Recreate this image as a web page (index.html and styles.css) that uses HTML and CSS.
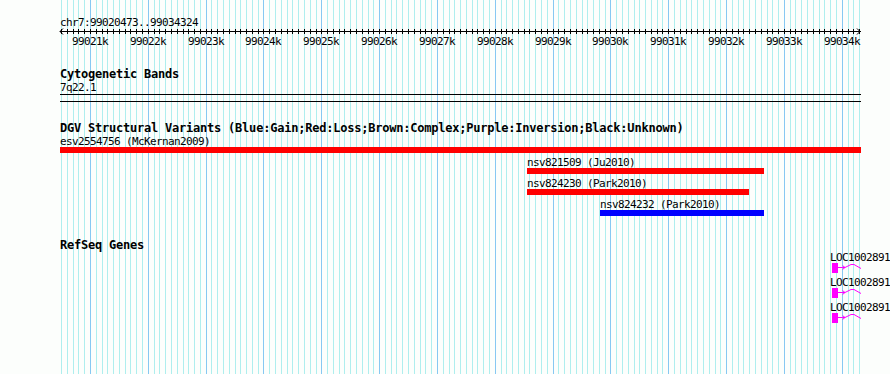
FILE: index.html
```html
<!DOCTYPE html>
<html lang="en">

<head>
    <meta charset="UTF-8">
    <meta name="viewport" content="width=device-width, initial-scale=1.0">
    <title>chr7:99020473..99034324</title>
    <link rel="stylesheet" href="styles.css">
</head>

<body>

<div class="panel">
    <svg class="grid" id="grid" width="890" height="374"></svg>

    <div class="tracks">
        <div class="ruler">
            <div class="ruler-label">chr7:99020473..99034324</div>
            <div class="axis" id="axis">
                <svg class="axis-line" id="axisLine" width="801" height="8"></svg>
            </div>
        </div>

        <div class="track cyto">
            <div class="track-title">Cytogenetic Bands</div>
            <div class="band-label">7q22.1</div>
            <div class="band"></div>
        </div>

        <div class="track dgv">
            <div class="track-title">DGV Structural Variants (Blue:Gain;Red:Loss;Brown:Complex;Purple:Inversion;Black:Unknown)</div>
            <div class="feature">
                <div class="feature-label">esv2554756 (McKernan2009)</div>
                <div class="bar loss" style="width:801px"></div>
            </div>
            <div class="feature" style="margin-left:467px">
                <div class="feature-label">nsv821509 (Ju2010)</div>
                <div class="bar loss" style="width:237px"></div>
            </div>
            <div class="feature" style="margin-left:467px">
                <div class="feature-label">nsv824230 (Park2010)</div>
                <div class="bar loss" style="width:222px"></div>
            </div>
            <div class="feature" style="margin-left:540px">
                <div class="feature-label">nsv824232 (Park2010)</div>
                <div class="bar gain" style="width:164px"></div>
            </div>
        </div>

        <div class="track refseq">
            <div class="track-title">RefSeq Genes</div>
            <div class="gene">
                <div class="gene-label">LOC1002891</div>
                <svg class="gene-glyph" width="30" height="11"><rect x="0" y="0" width="6" height="10" fill="#ff00ff"/><path d="M6 4.5H13M10.5 2.5L13 4.5L10.5 6.5M13 4.5L19 1.5H22L29 5.5" fill="none" stroke="#ff00ff" stroke-width="1"/></svg>
            </div>
            <div class="gene">
                <div class="gene-label">LOC1002891</div>
                <svg class="gene-glyph" width="30" height="11"><rect x="0" y="0" width="6" height="10" fill="#ff00ff"/><path d="M6 4.5H13M10.5 2.5L13 4.5L10.5 6.5M13 4.5L19 1.5H22L29 5.5" fill="none" stroke="#ff00ff" stroke-width="1"/></svg>
            </div>
            <div class="gene">
                <div class="gene-label">LOC1002891</div>
                <svg class="gene-glyph" width="30" height="11"><rect x="0" y="0" width="6" height="10" fill="#ff00ff"/><path d="M6 4.5H13M10.5 2.5L13 4.5L10.5 6.5M13 4.5L19 1.5H22L29 5.5" fill="none" stroke="#ff00ff" stroke-width="1"/></svg>
            </div>
        </div>
    </div>
</div>

<script>
const inicio = 99020473;
const fin = 99034324;
const izquierda = 60;
const ancho = 801;
const escala = ancho / (fin - inicio);
const NS = 'http://www.w3.org/2000/svg';

function posicion(bp) {
    return Math.floor(izquierda + (bp - inicio) * escala);
}

// Lineas de la rejilla cada 100 bp
const grid = document.getElementById('grid');
for (let bp = Math.ceil(inicio / 100) * 100; bp <= fin; bp += 100) {
    const r = document.createElementNS(NS, 'rect');
    r.setAttribute('x', posicion(bp));
    r.setAttribute('y', 0);
    r.setAttribute('width', 1);
    r.setAttribute('height', 374);
    r.setAttribute('fill', bp % 1000 === 0 ? '#87c8f2' : '#aeeeee');
    grid.appendChild(r);
}

// Regla con marcas y etiquetas
const axisLine = document.getElementById('axisLine');
const axis = document.getElementById('axis');
let d = 'M0 3.5H801M3 0.5L0 3.5L3 6.5M797 0.5L800 3.5L797 6.5';
for (let bp = Math.ceil(inicio / 100) * 100; bp <= fin; bp += 100) {
    const x = posicion(bp) - izquierda + 0.5;
    d += 'M' + x + ' 1V6';
    if (bp % 1000 === 0) {
        const label = document.createElement('span');
        label.className = 'tick-label';
        label.textContent = (bp / 1000) + 'k';
        label.style.left = (posicion(bp) - izquierda - 18) + 'px';
        axis.appendChild(label);
    }
}
const path = document.createElementNS(NS, 'path');
path.setAttribute('d', d);
path.setAttribute('fill', 'none');
path.setAttribute('stroke', '#000');
axisLine.appendChild(path);
</script>

</body>
</html>
```

FILE: styles.css
```css
body {
    margin: 0;
    background-color: #fcfefc;
    overflow: hidden;
    font-family: 'DejaVu Sans Mono', monospace;
    color: #000;
}

.panel {
    position: relative;
    width: 890px;
    height: 374px;
    overflow: hidden;
    box-sizing: border-box;
    padding: 17px 0 0 60px;
}

.grid {
    position: absolute;
    left: 0;
    top: 0;
}

.tracks {
    position: relative;
    width: 801px;
}

.ruler-label,
.band-label,
.feature-label,
.gene-label,
.tick-label {
    font-size: 11px;
    line-height: 11px;
    height: 11px;
    letter-spacing: -0.62px;
    white-space: nowrap;
}

.track-title {
    font-size: 12px;
    font-weight: bold;
    line-height: 12px;
    height: 12px;
    letter-spacing: -0.22px;
    white-space: nowrap;
}

.axis {
    position: relative;
    height: 20px;
}

.axis-line {
    display: block;
    overflow: visible;
}

.tick-label {
    position: absolute;
    top: 8px;
    width: 36px;
    text-align: center;
}

.cyto {
    margin-top: 20px;
}

.band-label {
    margin-top: 2px;
}

.band {
    margin-top: 1px;
    height: 6px;
    border-top: 1px solid #000;
    border-bottom: 1px solid #000;
}

.dgv {
    margin-top: 20px;
}

.dgv .track-title {
    margin-bottom: 2px;
}

.feature {
    height: 21px;
}

.bar {
    height: 6px;
}

.loss {
    background-color: #ff0000;
}

.gain {
    background-color: #0000ff;
}

.refseq {
    margin-top: 19px;
}

.refseq .track-title {
    margin-bottom: 1px;
}

.gene {
    height: 25px;
    margin-left: 770px;
}

.gene-glyph {
    display: block;
    margin-left: 2px;
    overflow: visible;
}
```
